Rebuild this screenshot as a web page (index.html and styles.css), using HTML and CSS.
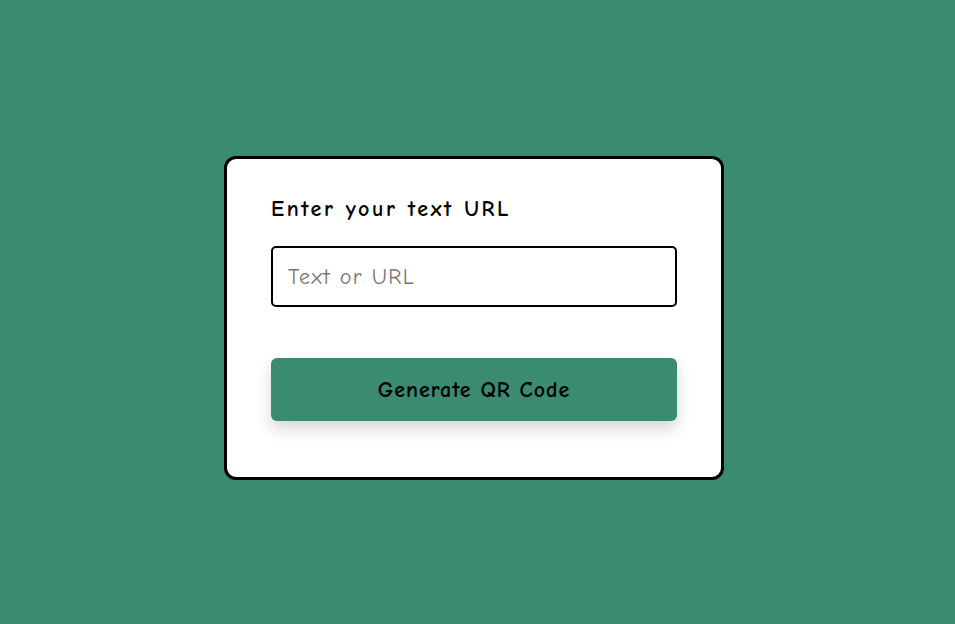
FILE: index.html
```html
<!DOCTYPE html>
<html lang="en">
<head>
<meta charset="UTF-8">
<title>QR Code Generator</title>
<link rel="stylesheet" href="styles.css">
</head>
<body>
  <main class="page">
    <div class="card">
      <p class="label">Enter your text URL</p>
      <input class="field" type="text" placeholder="Text or URL">
      <button class="btn" type="button">Generate QR Code</button>
    </div>
  </main>
</body>
</html>
```

FILE: styles.css
```css
* { box-sizing: border-box; }
html, body { margin: 0; padding: 0; }
body {
  background: #3a8b6f;
  font-family: "Comic Sans MS", "Comic Neue", "DejaVu Sans", sans-serif;
}
.page {
  min-height: 624px;
  display: flex;
  align-items: center;
  justify-content: center;
  padding: 12px 7px 0 0;
}
.card {
  width: 500px;
  height: 324px;
  background: #fff;
  border: 3px solid #000;
  border-radius: 12px;
  padding: 37px 44px 0 44px;
  display: flex;
  flex-direction: column;
}
.label {
  margin: 0;
  font-size: 22px;
  font-weight: bold;
  letter-spacing: 2.6px;
  line-height: 26px;
  color: #000;
}
.field {
  margin-top: 24px;
  height: 61px;
  width: 100%;
  border: 2px solid #000;
  border-radius: 5px;
  padding: 0 15px;
  font-family: inherit;
  font-size: 22px;
  letter-spacing: 1.4px;
  color: #000;
  outline: none;
}
.field::placeholder { color: #757575; }
.btn {
  margin-top: 51px;
  height: 63px;
  width: 100%;
  background: #3a8b6f;
  border: none;
  border-radius: 6px;
  font-family: inherit;
  font-size: 22px;
  font-weight: bold;
  letter-spacing: 1px;
  color: #000;
  box-shadow: 0 8px 16px rgba(0, 0, 0, 0.16);
  cursor: pointer;
}
```
